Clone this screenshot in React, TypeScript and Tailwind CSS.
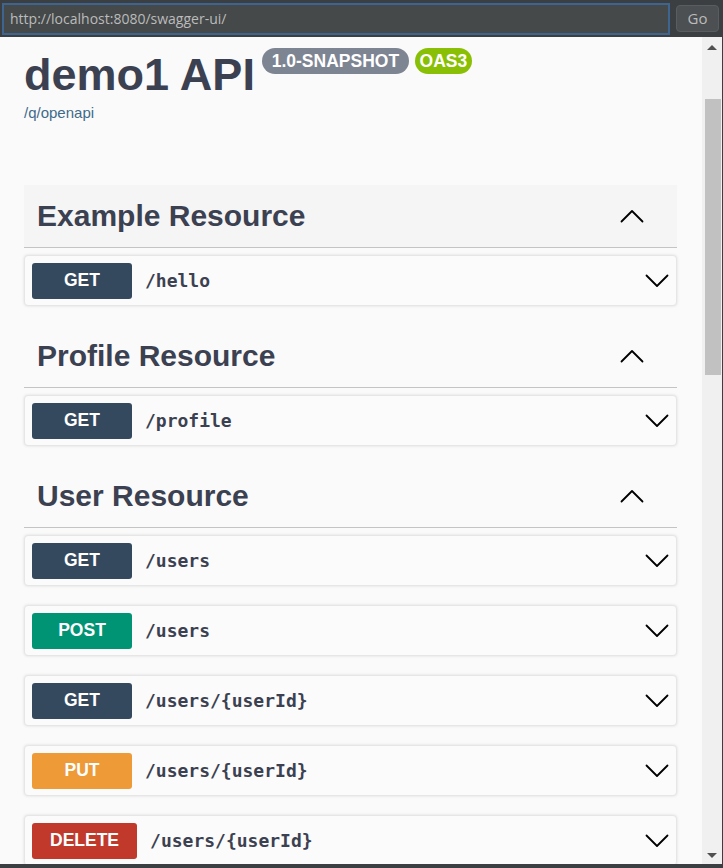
import React from "react";

type Method = "GET" | "POST" | "PUT" | "DELETE";

interface Operation {
  method: Method;
  path: string;
}

interface Tag {
  name: string;
  ops: Operation[];
  hovered?: boolean;
}

const methodBg: Record<Method, string> = {
  GET: "bg-[#35495e]",
  POST: "bg-[#009474]",
  PUT: "bg-[#ee9a36]",
  DELETE: "bg-[#c0392b]",
};

const tags: Tag[] = [
  { name: "Example Resource", hovered: true, ops: [{ method: "GET", path: "/hello" }] },
  { name: "Profile Resource", ops: [{ method: "GET", path: "/profile" }] },
  {
    name: "User Resource",
    ops: [
      { method: "GET", path: "/users" },
      { method: "POST", path: "/users" },
      { method: "GET", path: "/users/{userId}" },
      { method: "PUT", path: "/users/{userId}" },
      { method: "DELETE", path: "/users/{userId}" },
    ],
  },
];

function Chevron({ up }: { up?: boolean }) {
  return (
    <svg width="24" height="14" viewBox="0 0 24 14" fill="none" className="shrink-0">
      <path
        d={up ? "M1.5 12.5 L12 2 L22.5 12.5" : "M1.5 1.5 L12 12 L22.5 1.5"}
        stroke="#000"
        strokeWidth="1.8"
        strokeLinecap="round"
        strokeLinejoin="round"
      />
    </svg>
  );
}

function OperationRow({ op }: { op: Operation }) {
  return (
    <div className="h-[51px] mb-[19px] rounded-[4px] border border-[#e6e6e6] bg-[#fbfbfb] shadow-[0_0_3px_rgba(0,0,0,0.12)] flex items-center pl-[7px] pr-[7px]">
      {/* Badge méthode */}
      <div
        className={`h-[36px] min-w-[100px] px-[18px] rounded-[3px] flex items-center justify-center text-white font-bold text-[17.5px] ${methodBg[op.method]}`}
      >
        {op.method}
      </div>
      <span className="ml-[13px] flex-1 font-['DejaVu_Sans_Mono',monospace] font-bold text-[18px] text-[#3b4151]">
        {op.path}
      </span>
      <Chevron />
    </div>
  );
}

function TagSection({ tag }: { tag: Tag }) {
  return (
    <div>
      <div
        className={`h-[63px] flex items-center justify-between pl-[13px] pr-[33px] border-b border-[#c4c4c4] mb-[7px] ${
          tag.hovered ? "bg-[#f5f5f5]" : ""
        }`}
      >
        <h3 className="text-[30px] font-bold text-[#3b4151] leading-none">{tag.name}</h3>
        <Chevron up />
      </div>
      {tag.ops.map((op, i) => (
        <OperationRow key={i} op={op} />
      ))}
    </div>
  );
}

export default function App() {
  return (
    <div className="w-[723px] h-[868px] overflow-hidden bg-[#3c3f41] flex flex-col font-['Liberation_Sans',Arial,sans-serif]">
      {/* ── Barre d'adresse ── */}
      <div className="h-[37px] shrink-0 flex items-center pl-[2px] pr-[4px] gap-[6px]">
        <div className="h-[32px] flex-1 border-2 border-[#3e6590] bg-[#45494a] flex items-center pl-[6px] text-[14px] text-[#bbbbbb] font-['Open_Sans',sans-serif]">
          http://localhost:8080/swagger-ui/
        </div>
        <div className="h-[27px] w-[43px] rounded-[4px] border border-[#5a5d5f] bg-[#4c5052] flex items-center justify-center text-[15px] text-[#bbbbbb] font-['Open_Sans',sans-serif]">
          Go
        </div>
      </div>

      {/* ── Fenêtre de la page ── */}
      <div className="flex-1 flex min-h-0 pb-[4px] pr-[1px]">
        <div className="flex-1 bg-[#fafafa] overflow-hidden px-[24px] pr-[25px]">
          {/* Info */}
          <div className="pt-[12px] flex items-start">
            <h1 className="text-[45px] font-bold text-[#3b4151] leading-[1.15]">demo1 API</h1>
            <span className="ml-[7px] mt-[-1px] h-[26px] w-[147px] rounded-full bg-[#7d8492] text-white font-bold text-[17.5px] flex items-center justify-center">
              1.0-SNAPSHOT
            </span>
            <span className="ml-[6px] mt-[-1px] h-[26px] w-[57px] rounded-full bg-[#89bf04] text-white font-bold text-[17.5px] flex items-center justify-center">
              OAS3
            </span>
          </div>
          <div className="mt-[3px] text-[15px] text-[#3f6a8a] leading-[1.15]">/q/openapi</div>

          <div className="mt-[64px]">
            {tags.map((t) => (
              <TagSection key={t.name} tag={t} />
            ))}
          </div>
        </div>

        {/* Barre de défilement */}
        <div className="w-[20px] bg-[#f0f0f0] flex flex-col items-center">
          <div className="h-[20px] flex items-center justify-center">
            <div className="w-0 h-0 border-l-[5px] border-r-[5px] border-b-[5px] border-l-transparent border-r-transparent border-b-[#505050]" />
          </div>
          <div className="mt-[42px] h-[276px] w-[16px] ml-[2px] bg-[#c1c1c1]" />
          <div className="flex-1" />
          <div className="h-[18px] flex items-center justify-center">
            <div className="w-0 h-0 border-l-[5px] border-r-[5px] border-t-[5px] border-l-transparent border-r-transparent border-t-[#505050]" />
          </div>
        </div>
      </div>
    </div>
  );
}
